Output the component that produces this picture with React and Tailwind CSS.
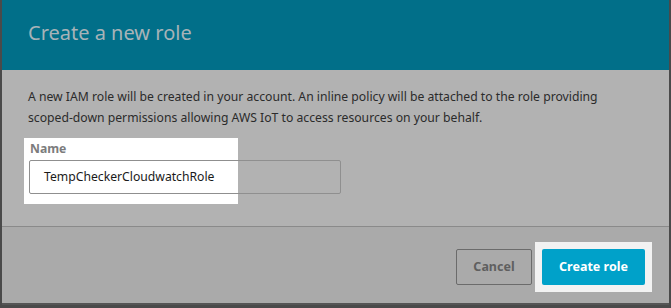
export default function App() {
  return (
    <div className="w-[671px] h-[308px] bg-[#4a4a4a] overflow-hidden" style={{ fontFamily: '"Noto Sans", "Open Sans", sans-serif' }}>
      <div className="ml-[2px] w-[667px] h-[305px] flex flex-col">
        <div className="h-[70px] bg-[#016f89] flex items-center pl-[26px] pb-[4px]">
          <h1 className="text-[20px] text-[#a7b3b8] font-normal">Create a new role</h1>
        </div>
        <div className="h-[156px] bg-[#b2b2b2] px-[26px] pt-[16px]">
          <p className="text-[12.2px] leading-[21px] text-[#2b2b2b]">
            A new IAM role will be created in your account. An inline policy will be attached to the role providing
            <br />
            scoped-down permissions allowing AWS IoT to access resources on your behalf.
          </p>
          <div className="relative mt-[10px] h-[66px]">
            <div className="absolute left-[-4px] top-0 w-[214px] h-[66px] bg-white" />
            <div className="relative pt-[3px] pl-[2px] text-[12.2px] leading-[16px] font-bold text-[#7c7c7c]">Name</div>
            <div className="relative mt-[3px] ml-[1px] w-[312px] h-[34px] rounded-[2px] border border-[#8f8f8f] flex items-center pl-[14px] text-[12.2px] text-[#1a1a1a]"
              style={{ background: 'linear-gradient(to right, #ffffff 0, #ffffff 207px, transparent 207px)' }}>
              TempCheckerCloudwatchRole
            </div>
          </div>
        </div>
        <div className="h-[1px] bg-[#8a8a8a]" />
        <div className="flex-1 bg-[#aaaaaa] flex justify-end items-start pt-[15px] pr-[17px]">
          <button className="mt-[7px] w-[76px] h-[36px] border border-[#6b6b6b] rounded-[2px] text-[12.5px] font-bold text-[#5f5f5f]">Cancel</button>
          <div className="ml-[3px] w-[117px] h-[50px] bg-[#f2f2f2] flex items-center justify-center">
            <button className="w-[103px] h-[36px] bg-[#00a1c9] rounded-[2px] text-[12.5px] font-bold text-white">Create role</button>
          </div>
        </div>
        <div className="h-[2px] bg-[#555]" />
      </div>
    </div>
  );
}
